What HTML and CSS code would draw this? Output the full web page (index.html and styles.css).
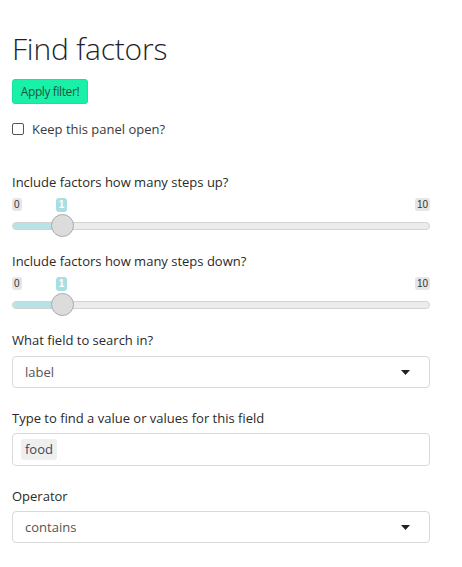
FILE: index.html
```html
<!DOCTYPE html>
<html>
<head>
<meta charset="utf-8">
<link rel="stylesheet" href="styles.css">
</head>
<body>
<div class="panel">
  <h2 class="title">Find factors</h2>
  <button class="btn-apply">Apply filter!</button>
  <label class="check">
    <span class="box"></span>
    <span>Keep this panel open?</span>
  </label>

  <div class="group slider-group">
    <div class="label">Include factors how many steps up?</div>
    <div class="slider">
      <div class="marks">
        <span class="mark">0</span>
        <span class="mark">10</span>
      </div>
      <span class="bubble">1</span>
      <div class="track"><div class="fill"></div></div>
      <span class="handle"></span>
    </div>
  </div>

  <div class="group slider-group second">
    <div class="label">Include factors how many steps down?</div>
    <div class="slider">
      <div class="marks">
        <span class="mark">0</span>
        <span class="mark">10</span>
      </div>
      <span class="bubble">1</span>
      <div class="track"><div class="fill"></div></div>
      <span class="handle"></span>
    </div>
  </div>

  <div class="group field first-field">
    <div class="label">What field to search in?</div>
    <div class="select">
      <span>label</span>
      <svg class="caret" width="9" height="5" viewBox="0 0 9 5"><path d="M0 0h9L4.5 5z" fill="#222"/></svg>
    </div>
  </div>

  <div class="group field">
    <div class="label">Type to find a value or values for this field</div>
    <div class="input">
      <span class="chip">food</span>
    </div>
  </div>

  <div class="group field">
    <div class="label">Operator</div>
    <div class="select">
      <span>contains</span>
      <svg class="caret" width="9" height="5" viewBox="0 0 9 5"><path d="M0 0h9L4.5 5z" fill="#222"/></svg>
    </div>
  </div>
</div>
</body>
</html>
```

FILE: styles.css
```css
* { box-sizing: border-box; }
body {
  margin: 0;
  background: #fff;
  font-family: "Open Sans", "Noto Sans", sans-serif;
  color: #333;
}
.panel {
  width: 430px;
  padding: 33px 0 0 12px;
  display: flex;
  flex-direction: column;
  align-items: flex-start;
}
.title {
  margin: 0;
  font-weight: 300;
  font-size: 30px;
  line-height: 32px;
  color: #1f1f30;
  letter-spacing: -0.2px;
}
.btn-apply {
  margin-top: 14px;
  width: 76px;
  height: 25px;
  border: 1px solid #12e4a0;
  border-radius: 3px;
  background: #19f0a8;
  color: #1d5542;
  font-family: inherit;
  font-size: 12px;
  padding: 0;
  letter-spacing: -0.4px;
}
.check {
  margin-top: 16px;
  display: flex;
  align-items: center;
  gap: 8px;
  font-size: 13px;
  color: #3a3a3a;
}
.box {
  width: 12px;
  height: 12px;
  border: 1px solid #555;
  border-radius: 2px;
}
.group { width: 418px; }
.label {
  font-size: 13px;
  line-height: 18px;
  color: #2a2a2a;
}
.slider-group { margin-top: 35px; }
.slider-group.second { margin-top: 15px; }
.slider {
  position: relative;
  height: 39px;
  margin-top: 7px;
}
.marks {
  display: flex;
  justify-content: space-between;
}
.mark {
  font-family: "Liberation Sans", sans-serif;
  font-size: 10px;
  line-height: 13px;
  padding: 0 2px;
  background: #e5e5e5;
  color: #333;
  border-radius: 3px;
}
.bubble {
  position: absolute;
  left: 44px;
  top: 0;
  width: 11px;
  height: 14px;
  background: #a9dfe2;
  color: #fff;
  font-family: "Liberation Sans", sans-serif;
  font-weight: bold;
  font-size: 10px;
  line-height: 14px;
  text-align: center;
  border-radius: 3px;
}
.track {
  margin-top: 11px;
  height: 8px;
  border: 1px solid #d3d3d3;
  border-radius: 4px;
  background: #ececec;
  overflow: hidden;
}
.fill {
  width: 50px;
  height: 100%;
  background: #b7e3e6;
}
.handle {
  position: absolute;
  left: 39px;
  top: 16px;
  width: 23px;
  height: 23px;
  border-radius: 50%;
  background: #dcdcdc;
  border: 1px solid #aaa;
}
.field { margin-top: 21px; }
.field.first-field { margin-top: 15px; }
.field .label { margin-bottom: 6px; }
.field.first-field .label { margin-bottom: 7px; }
.select, .input {
  height: 33px;
  border: 1px solid #d9d9d9;
  border-radius: 4px;
  display: flex;
  align-items: center;
  padding: 0 12px;
  font-size: 13px;
  color: #555;
}
.select { justify-content: space-between; padding-right: 19px; height: 32px; }
.input { padding-left: 8px; }
.chip {
  background: #efefef;
  border-radius: 3px;
  padding: 1px 4px;
  line-height: 19px;
  color: #34495e;
  font-size: 13px;
}
```
